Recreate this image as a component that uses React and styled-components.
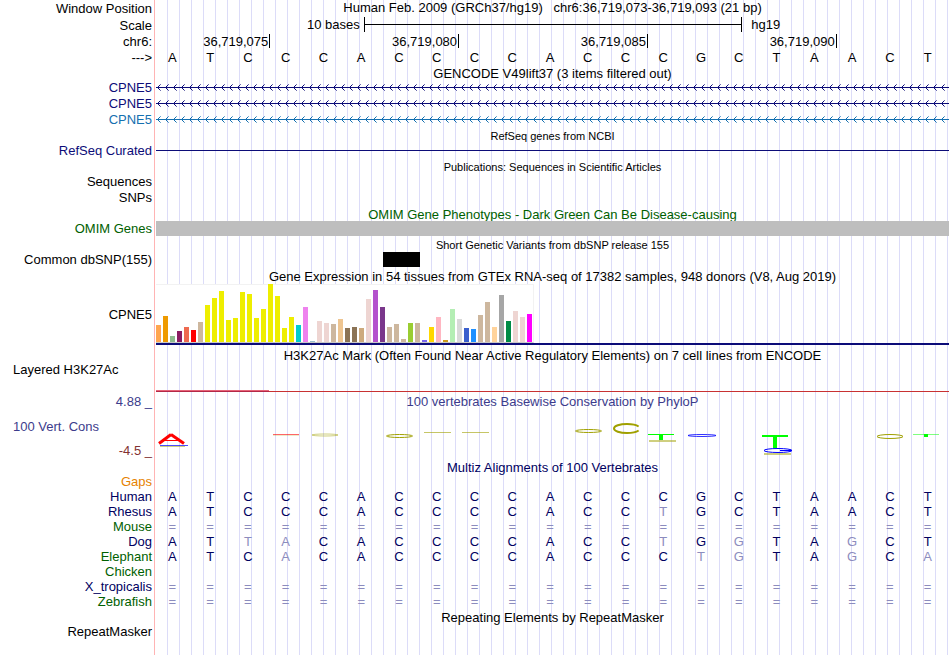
import React from "react";
import styled, { createGlobalStyle } from "styled-components";

const GlobalStyle = createGlobalStyle`
  body {
    margin: 0;
    background: #fff;
  }
`;

const NAVY = "#0c0c78";
const BLUE = "#1470b0";
const GREEN = "#006000";
const DEEP = "#00005f";
const CONS = "#3c3c8c";

const Page = styled.main`
  box-sizing: border-box;
  min-height: 100vh;
  padding-right: 1px;
  font-family: "Liberation Sans", Arial, sans-serif;
  font-size: 13px;
  color: #000;
  white-space: nowrap;
  background-image: linear-gradient(#ffb4b4, #ffb4b4),
    repeating-linear-gradient(to right, transparent 0 11px, #dcdcf8 11px 12px);
  background-size: 1px 100%, auto;
  background-position: 154px 0, 156px 0;
  background-repeat: no-repeat;
`;

const Row = styled.section`
  display: grid;
  grid-template-columns: 152px minmax(0, 1fr);
  column-gap: 4px;
  height: ${(p) => p.$h}px;
  line-height: ${(p) => p.$h}px;
`;

const Label = styled.div`
  text-align: right;
  color: ${(p) => p.$color || "#000"};
`;

const SideLabel = styled.div`
  padding-left: 13px;
  text-align: left;
  line-height: ${(p) => p.$line || 16}px;
  color: ${(p) => p.$color || "#000"};
`;

const Title = styled.h2`
  grid-column: 2;
  margin: 0;
  padding-top: 1px;
  text-align: center;
  font-weight: normal;
  font-size: ${(p) => (p.$small ? 11 : 13)}px;
  color: ${(p) => p.$color || "#000"};
`;

const Position = styled.h1`
  margin: 0;
  text-align: center;
  font-weight: normal;
  font-size: 13px;
  line-height: 16px;
  white-space: pre;
`;

const Scale = styled.div`
  display: grid;
  grid-template-columns: 550fr 1000fr 550fr;
  line-height: 16px;
`;

const ScaleText = styled.span`
  padding: 0 ${(p) => (p.$end ? 10 : 4)}px;
  text-align: ${(p) => (p.$end ? "left" : "right")};
`;

const ScaleBar = styled.div`
  height: 15px;
  margin-right: -1px;
  border: solid #000;
  border-width: 0 1px;
  background: linear-gradient(#000, #000) 0 7px / 100% 1px no-repeat;
`;

const Ruler = styled.div`
  display: grid;
  grid-template-columns: 3fr 5fr 5fr 5fr 3fr;
`;

const Tick = styled.span`
  height: 14px;
  margin-right: -1px;
  padding-right: 1px;
  border-right: 1px solid #000;
  text-align: right;
`;

const Bases = styled.div`
  display: grid;
  grid-template-columns: repeat(21, minmax(0, 1fr));
`;

const Base = styled.span`
  padding-right: 5px;
  text-align: center;
  color: ${(p) => p.$color};
`;

const Graph = styled.svg`
  display: block;
  width: 100%;
  height: ${(p) => p.$h}px;
`;

const Rule = styled.div`
  height: 1px;
  margin-top: 7px;
  background: ${NAVY};
`;

const Block = styled.div`
  height: 15px;
  background: #bebebe;
`;

const Variant = styled.div`
  width: 37px;
  height: 15px;
  margin-left: 28.6%;
  background: #000;
`;

const Expression = styled.div`
  border-bottom: 2px solid ${NAVY};
`;

const Bars = styled.div`
  display: flex;
  align-items: flex-end;
  gap: 2px;
  box-sizing: border-box;
  width: 378px;
  height: 59px;
  border-right: 1px solid #f2f2f2;
  border-bottom: 1px solid #c8c8c8;
  background: linear-gradient(#f2f2f2, #f2f2f2) 0 0 / 100% 1px no-repeat #fff;
`;

const Bar = styled.i`
  width: 5px;
`;

const Signal = styled.div`
  align-self: end;
  height: 1px;
  background: #c83232;
  &::before {
    content: "";
    display: block;
    width: 14.3%;
    height: 2px;
    margin-top: -1px;
    background: linear-gradient(#e66478 1px, #b42846 1px);
  }
`;

const ConsLabels = styled.div`
  display: flex;
  flex-direction: column;
  justify-content: space-between;
  padding-top: 1px;
  line-height: 18px;
`;

const ConsPlot = styled.div`
  display: flex;
  flex-direction: column;
  gap: 11px;
  line-height: 17px;
`;

const HUMAN = "ATCCCACCCCACCCGCTAACT";
const EQUALS = "=".repeat(21);

// lower case marks a base that differs from human
const species = [
  { name: "Gaps", color: "#e68200", seq: "" },
  { name: "Human", color: DEEP, seq: HUMAN },
  { name: "Rhesus", color: DEEP, seq: "ATCCCACCCCACCtGCTAACT" },
  { name: "Mouse", color: GREEN, seq: EQUALS },
  { name: "Dog", color: DEEP, seq: "ATtaCACCCCACCtGgTAgCT" },
  { name: "Elephant", color: GREEN, seq: "ATCaCACCCCACCCtgTAgCa" },
  { name: "Chicken", color: GREEN, seq: "" },
  { name: "X_tropicalis", color: DEEP, seq: EQUALS },
  { name: "Zebrafish", color: GREEN, seq: EQUALS },
];

const tissues = [
  [17, "#ffa54f"], [26, "#ee9a00"], [6, "#8fbc8f"], [11, "#8b1c62"],
  [15, "#ee6a50"], [12, "#ff0000"], [20, "#cdb79e"],
  ...[37, 44, 51, 22, 24, 50, 48, 24, 33, 58, 46, 14, 25].map((h) => [h, "#eeee00"]),
  [17, "#00cdcd"], [35, "#ee82ee"], [1, "#9ac0cd"], [21, "#eed5d2"],
  [19, "#eed5d2"], [18, "#cdb79e"], [23, "#eec591"], [14, "#8b7355"],
  [15, "#8b7355"], [14, "#cdaa7d"], [43, "#eed5d2"], [52, "#b452cd"],
  [35, "#7a378b"], [15, "#cdb79e"], [18, "#cdb79e"], [3, "#cdb79e"],
  [19, "#9acd32"], [19, "#cdb79e"], [2, "#7a67ee"], [15, "#ffd700"],
  [25, "#ffb6c1"], [2, "#cd9b1d"], [33, "#b4eeb4"], [23, "#d9d9d9"],
  [14, "#3a5fcd"], [13, "#1e90ff"], [27, "#cdb79e"], [40, "#cdb79e"],
  [15, "#ffd39b"], [47, "#a6a6a6"], [21, "#008b45"], [31, "#eed5d2"],
  [25, "#eed5d2"], [28, "#ff00ff"],
];

const Sequence = ({ seq, color = "#000" }) => (
  <Bases>
    {seq.split("").map((b, i) => (
      <Base key={i} $color={b === "=" || b !== b.toUpperCase() ? "#8c8cbe" : color}>
        {b.toUpperCase()}
      </Base>
    ))}
  </Bases>
);

const Gene = ({ id, color }) => (
  <Row $h={16}>
    <Label $color={color}>CPNE5</Label>
    <Graph $h={16} shapeRendering="crispEdges">
      <defs>
        <pattern id={id} width="8" height="16" patternUnits="userSpaceOnUse">
          <g fill={color}>
            <rect y="7" width="8" height="1" />
            <rect x="2" y="6" width="1" height="3" />
            <rect x="3" y="5" width="1" height="1" />
            <rect x="3" y="9" width="1" height="1" />
            <rect x="4" y="4" width="1" height="1" opacity="0.6" />
            <rect x="4" y="10" width="1" height="1" opacity="0.6" />
          </g>
        </pattern>
      </defs>
      <rect width="100%" height="16" fill={`url(#${id})`} />
    </Graph>
  </Row>
);

// flattened base marks of the PhyloP track
const Conservation = () => (
  <Graph $h={38} viewBox="0 0 793 38" preserveAspectRatio="none" fill="none">
    <g stroke="#a0a000">
      <line x1="4" y1="25.5" x2="29" y2="25.5" opacity="0.5" />
      <line x1="117" y1="14.5" x2="143" y2="14.5" opacity="0.2" />
      <ellipse cx="169" cy="14" rx="13" ry="1" opacity="0.5" />
      <ellipse cx="243.5" cy="15" rx="13" ry="1.5" />
      <line x1="268" y1="11.5" x2="295" y2="11.5" opacity="0.6" />
      <line x1="306" y1="11.5" x2="333" y2="11.5" opacity="0.6" />
      <ellipse cx="432.5" cy="10" rx="13" ry="1.5" />
      <ellipse
        cx="471"
        cy="7.5"
        rx="13"
        ry="4.5"
        strokeWidth="2"
        pathLength="100"
        strokeDasharray="91 9"
        strokeDashoffset="-4.5"
      />
      <line x1="493" y1="20" x2="520" y2="20" strokeWidth="2" opacity="0.5" />
      <line x1="608" y1="33" x2="635" y2="33" strokeWidth="2" opacity="0.5" />
      <ellipse cx="734" cy="15.5" rx="13" ry="2" />
    </g>
    <g stroke="#0000ff">
      <line x1="4" y1="24.5" x2="32" y2="24.5" opacity="0.7" />
      <ellipse cx="546" cy="14.5" rx="14" ry="1" opacity="0.8" />
      <ellipse cx="622" cy="29.5" rx="14" ry="2" />
      <line x1="624" y1="29.5" x2="636" y2="29.5" />
    </g>
    <g stroke="#ff0000">
      <line x1="3" y1="22.5" x2="15" y2="13.5" strokeWidth="3" />
      <line x1="15" y1="13.5" x2="28" y2="22.5" strokeWidth="3" />
      <line x1="8" y1="19.5" x2="24" y2="19.5" />
      <line x1="117" y1="13.5" x2="143" y2="13.5" opacity="0.6" />
    </g>
    <g fill="#00ff00">
      <rect x="492" y="13" width="26" height="1" />
      <rect x="503" y="14" width="4" height="5" />
      <rect x="606" y="14" width="26" height="2" />
      <rect x="617" y="15" width="4" height="12" />
      <rect x="757" y="13" width="26" height="1" opacity="0.5" />
      <rect x="768" y="13" width="4" height="3" />
    </g>
  </Graph>
);

const App = () => {
  return (
    <>
      <GlobalStyle />
      <Page>
        <Row $h={17}>
          <Label>Window Position</Label>
          <Position>
            {"Human Feb. 2009 (GRCh37/hg19)   chr6:36,719,073-36,719,093 (21 bp)"}
          </Position>
        </Row>
        <Row $h={17}>
          <Label>Scale</Label>
          <Scale>
            <ScaleText>10 bases</ScaleText>
            <ScaleBar />
            <ScaleText $end>hg19</ScaleText>
          </Scale>
        </Row>
        <Row $h={16}>
          <Label>chr6:</Label>
          <Ruler>
            {["36,719,075", "36,719,080", "36,719,085", "36,719,090"].map((pos) => (
              <Tick key={pos}>{pos}</Tick>
            ))}
          </Ruler>
        </Row>
        <Row $h={15}>
          <Label>---&gt;</Label>
          <Sequence seq={HUMAN} />
        </Row>

        <Row $h={15}>
          <Title>GENCODE V49lift37 (3 items filtered out)</Title>
        </Row>
        <Gene id="gene-1" color={NAVY} />
        <Gene id="gene-2" color={NAVY} />
        <Gene id="gene-3" color={BLUE} />

        <Row $h={15}>
          <Title $small>RefSeq genes from NCBI</Title>
        </Row>
        <Row $h={16}>
          <Label $color={NAVY}>RefSeq Curated</Label>
          <Rule />
        </Row>

        <Row $h={15}>
          <Title $small>Publications: Sequences in Scientific Articles</Title>
        </Row>
        <Row $h={16}>
          <Label>Sequences</Label>
        </Row>
        <Row $h={16}>
          <Label>SNPs</Label>
        </Row>

        <Row $h={15}>
          <Title $color={GREEN}>OMIM Gene Phenotypes - Dark Green Can Be Disease-causing</Title>
        </Row>
        <Row $h={15}>
          <Label $color={GREEN}>OMIM Genes</Label>
          <Block />
        </Row>

        <Row $h={16}>
          <Title $small>Short Genetic Variants from dbSNP release 155</Title>
        </Row>
        <Row $h={15}>
          <Label>Common dbSNP(155)</Label>
          <Variant />
        </Row>

        <Row $h={17}>
          <Title>
            Gene Expression in 54 tissues from GTEx RNA-seq of 17382 samples, 948 donors (V8, Aug 2019)
          </Title>
        </Row>
        <Row $h={61}>
          <Label>CPNE5</Label>
          <Expression>
            <Bars>
              {tissues.map(([height, background], i) => (
                <Bar key={i} style={{ height, background }} />
              ))}
            </Bars>
          </Expression>
        </Row>

        <Row $h={20}>
          <Title>
            H3K27Ac Mark (Often Found Near Active Regulatory Elements) on 7 cell lines from ENCODE
          </Title>
        </Row>
        <Row $h={27}>
          <SideLabel $line={10}>Layered H3K27Ac</SideLabel>
          <Signal />
        </Row>

        <Row $h={68}>
          <ConsLabels>
            <Label $color={CONS}>4.88 _</Label>
            <SideLabel $color={CONS}>100 Vert. Cons</SideLabel>
            <Label $color="#823232">-4.5 _</Label>
          </ConsLabels>
          <ConsPlot>
            <Title $color={CONS}>100 vertebrates Basewise Conservation by PhyloP</Title>
            <Conservation />
          </ConsPlot>
        </Row>

        <Row $h={14}>
          <Title $color={DEEP}>Multiz Alignments of 100 Vertebrates</Title>
        </Row>
        {species.map((s) => (
          <Row key={s.name} $h={15}>
            <Label $color={s.color}>{s.name}</Label>
            <Sequence seq={s.seq} color={DEEP} />
          </Row>
        ))}

        <Row $h={15}>
          <Title>Repeating Elements by RepeatMasker</Title>
        </Row>
        <Row $h={15}>
          <Label>RepeatMasker</Label>
        </Row>
      </Page>
    </>
  );
};

export default App;
